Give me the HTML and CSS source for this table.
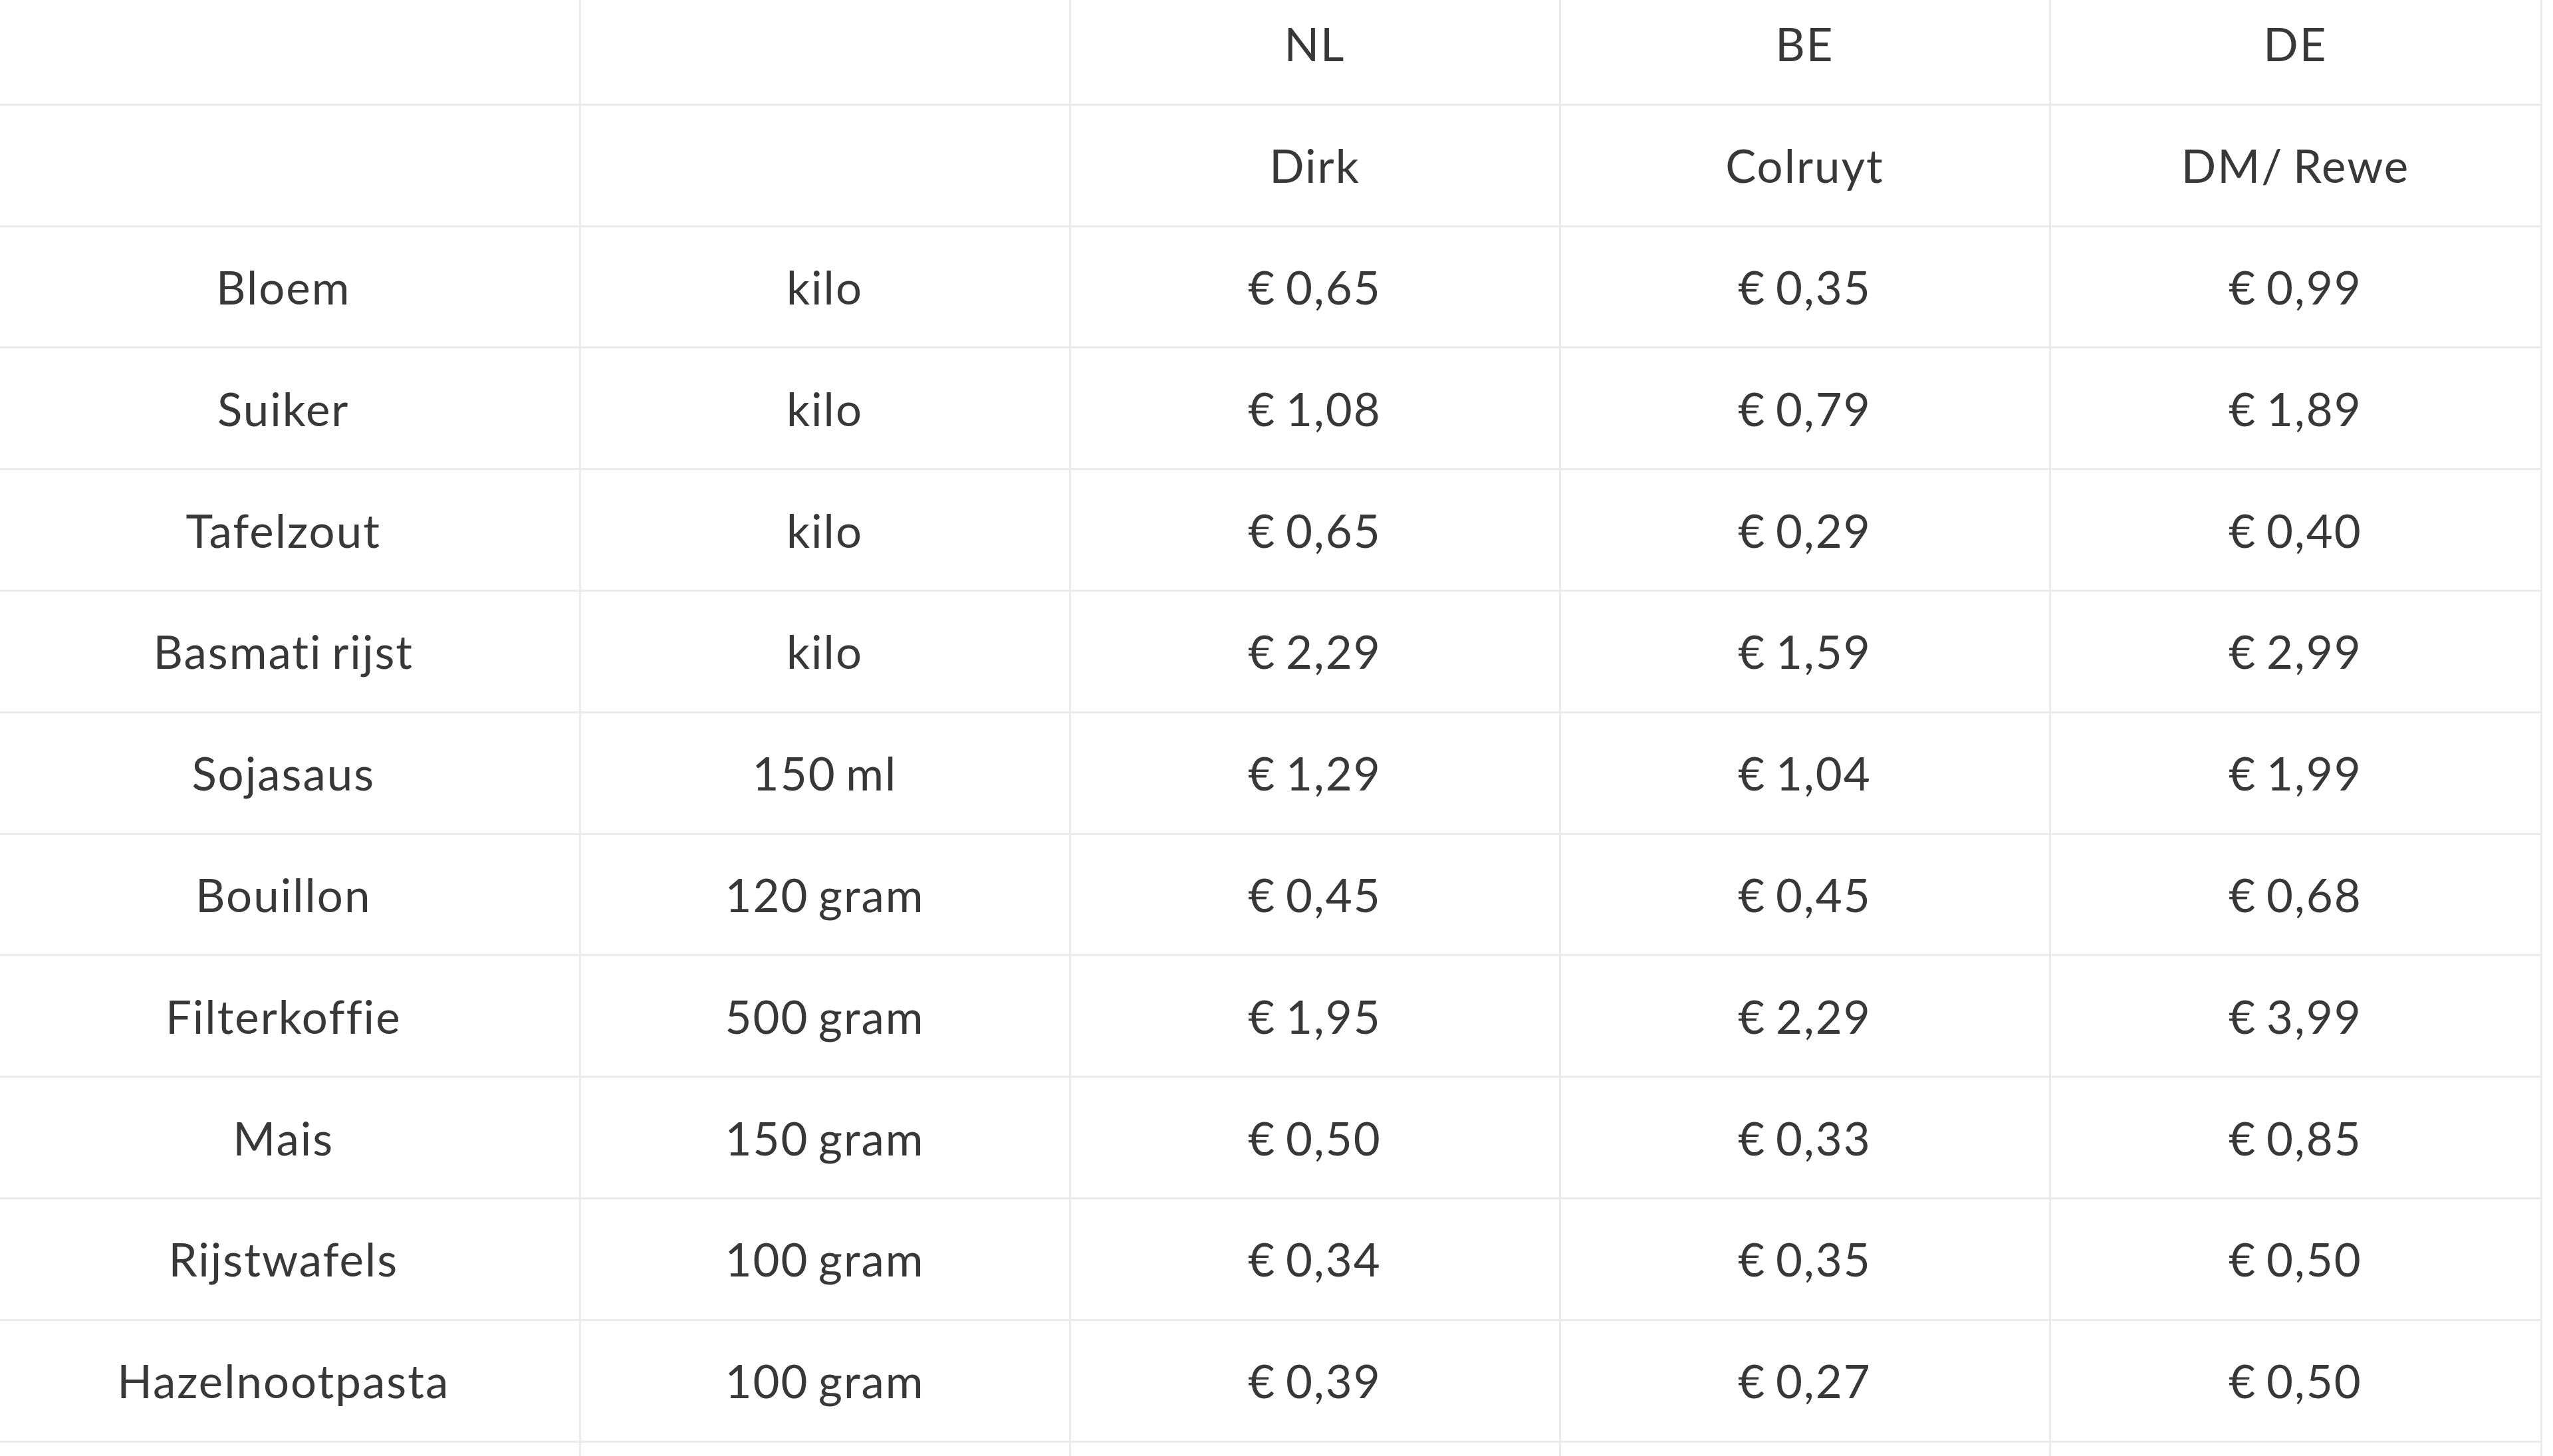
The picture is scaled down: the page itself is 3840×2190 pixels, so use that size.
FILE: index.html
```html
<!DOCTYPE html>
<html lang="nl">
<head>
<meta charset="utf-8">
<title>Prijsvergelijking</title>
<link rel="stylesheet" href="styles.css">
</head>
<body>
<div class="wrap">
<table class="prices">
<colgroup>
<col class="c-name"><col class="c-unit"><col class="c-nl"><col class="c-be"><col class="c-de">
</colgroup>
<tbody>
<tr><td></td><td></td><td>NL</td><td>BE</td><td>DE</td></tr>
<tr><td></td><td></td><td>Dirk</td><td>Colruyt</td><td>DM/ Rewe</td></tr>
<tr><td>Bloem</td><td>kilo</td><td>€ 0,65</td><td>€ 0,35</td><td>€ 0,99</td></tr>
<tr><td>Suiker</td><td>kilo</td><td>€ 1,08</td><td>€ 0,79</td><td>€ 1,89</td></tr>
<tr><td>Tafelzout</td><td>kilo</td><td>€ 0,65</td><td>€ 0,29</td><td>€ 0,40</td></tr>
<tr><td>Basmati rijst</td><td>kilo</td><td>€ 2,29</td><td>€ 1,59</td><td>€ 2,99</td></tr>
<tr><td>Sojasaus</td><td>150 ml</td><td>€ 1,29</td><td>€ 1,04</td><td>€ 1,99</td></tr>
<tr><td>Bouillon</td><td>120 gram</td><td>€ 0,45</td><td>€ 0,45</td><td>€ 0,68</td></tr>
<tr><td>Filterkoffie</td><td>500 gram</td><td>€ 1,95</td><td>€ 2,29</td><td>€ 3,99</td></tr>
<tr><td>Mais</td><td>150 gram</td><td>€ 0,50</td><td>€ 0,33</td><td>€ 0,85</td></tr>
<tr><td>Rijstwafels</td><td>100 gram</td><td>€ 0,34</td><td>€ 0,35</td><td>€ 0,50</td></tr>
<tr><td>Hazelnootpasta</td><td>100 gram</td><td>€ 0,39</td><td>€ 0,27</td><td>€ 0,50</td></tr>
<tr><td></td><td></td><td></td><td></td><td></td></tr>
</tbody>
</table>
</div>
</body>
</html>
```
FILE: styles.css
```css
html, body {
  margin: 0;
  padding: 0;
  background: #ffffff;
}
body {
  font-family: Lato, "Open Sans", "Liberation Sans", sans-serif;
  color: #383838;
  overflow: hidden;
  height: 2190px;
}
.wrap {
  margin-top: -24px;
}
.prices {
  border-collapse: collapse;
  table-layout: fixed;
  width: 3822px;
}
.c-name { width: 872px; }
.c-unit { width: 737px; }
.c-nl { width: 737px; }
.c-be { width: 737px; }
.c-de { width: 739px; }
.prices td {
  height: 179.8px;
  padding: 0;
  border: 3px solid #ebebeb;
  text-align: center;
  vertical-align: middle;
  font-size: 69px;
  font-weight: 400;
  letter-spacing: 2px;
  word-spacing: -5px;
  font-variant-ligatures: none;
  line-height: 1;
}
.prices tr:first-child td { border-top: none; }
.prices td:first-child {
  border-left: none;
  padding-right: 18px;
}
```
